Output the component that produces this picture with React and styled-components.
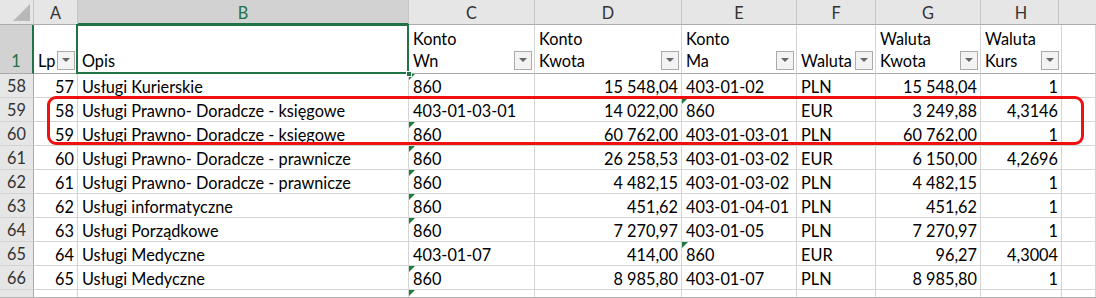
import React from 'react';
import styled, { createGlobalStyle } from 'styled-components';

const GlobalStyle = createGlobalStyle`
  html, body {
    margin: 0;
    padding: 0;
    background: #ffffff;
    overflow: hidden;
  }
  * {
    box-sizing: border-box;
  }
`;

const GREEN = '#217346';
const GRID = '#d4d4d4';

const columns = ['A', 'B', 'C', 'D', 'E', 'F', 'G', 'H', ''];

const headers = [
  { top: '', label: 'Lp', filter: true },
  { top: '', label: 'Opis', filter: false, selected: true },
  { top: 'Konto', label: 'Wn', filter: true },
  { top: 'Konto', label: 'Kwota', filter: true },
  { top: 'Konto', label: 'Ma', filter: true },
  { top: '', label: 'Waluta', filter: true },
  { top: 'Waluta', label: 'Kwota', filter: true },
  { top: 'Waluta', label: 'Kurs', filter: true },
  { top: '', label: '', filter: false },
];

// [row, lp, opis, wn, kwota, ma, waluta, walKwota, kurs, wnFlag, maFlag]
const rows = [
  ['58', '57', 'Usługi Kurierskie', '860', '15 548,04', '403-01-02', 'PLN', '15 548,04', '1', true, false],
  ['59', '58', 'Usługi Prawno- Doradcze - księgowe', '403-01-03-01', '14 022,00', '860', 'EUR', '3 249,88', '4,3146', false, true],
  ['60', '59', 'Usługi Prawno- Doradcze - księgowe', '860', '60 762,00', '403-01-03-01', 'PLN', '60 762,00', '1', true, false],
  ['61', '60', 'Usługi Prawno- Doradcze - prawnicze', '860', '26 258,53', '403-01-03-02', 'EUR', '6 150,00', '4,2696', true, false],
  ['62', '61', 'Usługi Prawno- Doradcze - prawnicze', '860', '4 482,15', '403-01-03-02', 'PLN', '4 482,15', '1', true, false],
  ['63', '62', 'Usługi informatyczne', '860', '451,62', '403-01-04-01', 'PLN', '451,62', '1', true, false],
  ['64', '63', 'Usługi Porządkowe', '860', '7 270,97', '403-01-05', 'PLN', '7 270,97', '1', true, false],
  ['65', '64', 'Usługi Medyczne', '403-01-07', '414,00', '860', 'EUR', '96,27', '4,3004', false, true],
  ['66', '65', 'Usługi Medyczne', '860', '8 985,80', '403-01-07', 'PLN', '8 985,80', '1', true, false],
  ['', '', '', '', '', '', '', '', '', true, false],
];

const App = () => {
  return (
    <>
      <GlobalStyle />
      <Viewport>
        <Sheet>
          <Corner>
            <CornerMark />
          </Corner>
          {columns.map((c, i) => (
            <ColHead key={c + i} $selected={c === 'B'} $last={i === columns.length - 1}>
              {c}
            </ColHead>
          ))}

          <RowHead $selected $tall>1</RowHead>
          {headers.map((h, i) => (
            <HeadCell key={i} $selected={h.selected}>
              <HeadLine>{h.top}</HeadLine>
              <HeadLine>
                <span>{h.label}</span>
                {h.filter && (
                  <FilterBtn>
                    <Caret />
                  </FilterBtn>
                )}
              </HeadLine>
              {h.selected && <FillHandle />}
            </HeadCell>
          ))}

          {rows.map((r, idx) => (
            <React.Fragment key={idx}>
              <RowHead>{r[0]}</RowHead>
              <Cell $right>{r[1]}</Cell>
              <Cell>{r[2]}</Cell>
              <Cell $flag={r[9]}>{r[3]}</Cell>
              <Cell $right>{r[4]}</Cell>
              <Cell $flag={r[10]}>{r[5]}</Cell>
              <Cell>{r[6]}</Cell>
              <Cell $right>{r[7]}</Cell>
              <Cell $right>{r[8]}</Cell>
              <Cell />
            </React.Fragment>
          ))}
        </Sheet>
        <Highlight />
      </Viewport>
    </>
  );
};
export default App;

// STYLE
const Viewport = styled.div`
  position: relative;
  width: 1096px;
  height: 298px;
  overflow: hidden;
  background: #fff;
  font-family: Lato, 'Liberation Sans', sans-serif;
  font-size: 16.3px;
  color: #000;
  border-bottom: 1px solid #b4b4b4;
`;
const Sheet = styled.div`
  display: grid;
  grid-template-columns: 34px 44px 331px 126px 147px 115px 79px 105px 81px 1fr;
  grid-template-rows: 25px 49px repeat(10, 24px);
`;
const Corner = styled.div`
  position: relative;
  background: #e6e6e6;
  border-right: 1px solid #c6c6c6;
  border-bottom: 1px solid #ababab;
`;
const CornerMark = styled.div`
  position: absolute;
  right: 3px;
  bottom: 3px;
  width: 0;
  height: 0;
  border-left: 17px solid transparent;
  border-bottom: 17px solid #b8b8b8;
`;
const ColHead = styled.div`
  display: flex;
  align-items: center;
  justify-content: center;
  background: ${(p) => (p.$selected ? '#d2d2d2' : '#e6e6e6')};
  color: ${(p) => (p.$selected ? GREEN : '#333')};
  border-right: ${(p) => (p.$last ? 'none' : '1px solid #c6c6c6')};
  border-left: ${(p) => (p.$last ? '1px solid #c6c6c6' : 'none')};
  margin-left: ${(p) => (p.$last ? '-4px' : '0')};
  border-bottom: ${(p) => (p.$selected ? `2px solid ${GREEN}` : '1px solid #ababab')};
  padding-top: 1px;
`;
const RowHead = styled.div`
  display: flex;
  align-items: ${(p) => (p.$tall ? 'flex-end' : 'center')};
  justify-content: center;
  padding-bottom: ${(p) => (p.$tall ? '3px' : '0')};
  background: ${(p) => (p.$selected ? '#d2d2d2' : '#e6e6e6')};
  color: ${(p) => (p.$selected ? GREEN : '#333')};
  border-right: ${(p) => (p.$selected ? `2px solid ${GREEN}` : '1px solid #ababab')};
  border-bottom: ${(p) => (p.$tall ? '1px solid #a8a8a8' : `1px solid ${GRID}`)};
`;
const HeadCell = styled.div`
  position: relative;
  display: flex;
  flex-direction: column;
  justify-content: flex-end;
  padding: 0 2px 2px 4px;
  border-right: 1px solid ${GRID};
  border-bottom: 1px solid #a8a8a8;
  ${(p) =>
    p.$selected &&
    `
    &::after {
      content: '';
      position: absolute;
      left: -2px;
      top: -1px;
      right: -1px;
      bottom: -1px;
      border: 2px solid ${GREEN};
      pointer-events: none;
    }
  `}
`;
const HeadLine = styled.div`
  display: flex;
  align-items: center;
  justify-content: space-between;
  height: 22px;
  white-space: nowrap;
`;
const FilterBtn = styled.div`
  display: flex;
  align-items: center;
  justify-content: center;
  width: 18px;
  height: 19px;
  flex: none;
  border: 1px solid #ababab;
  background: #f3f3f3;
`;
const Caret = styled.div`
  width: 0;
  height: 0;
  border-left: 4px solid transparent;
  border-right: 4px solid transparent;
  border-top: 4px solid #666;
`;
const FillHandle = styled.div`
  position: absolute;
  right: -4px;
  bottom: -4px;
  width: 6px;
  height: 6px;
  background: ${GREEN};
  border: 1px solid #fff;
  z-index: 2;
`;
const Cell = styled.div`
  position: relative;
  display: flex;
  align-items: center;
  justify-content: ${(p) => (p.$right ? 'flex-end' : 'flex-start')};
  padding: 1px 3px 0 4px;
  white-space: nowrap;
  overflow: hidden;
  border-right: 1px solid ${GRID};
  border-bottom: 1px solid ${GRID};
  ${(p) =>
    p.$flag &&
    `
    &::before {
      content: '';
      position: absolute;
      left: 0;
      top: 0;
      width: 0;
      height: 0;
      border-top: 6px solid #1e7b3c;
      border-right: 6px solid transparent;
    }
  `}
`;
const Highlight = styled.div`
  position: absolute;
  left: 47px;
  top: 96px;
  width: 1037px;
  height: 49px;
  border: 3px solid #f01010;
  border-radius: 9px;
  pointer-events: none;
`;
